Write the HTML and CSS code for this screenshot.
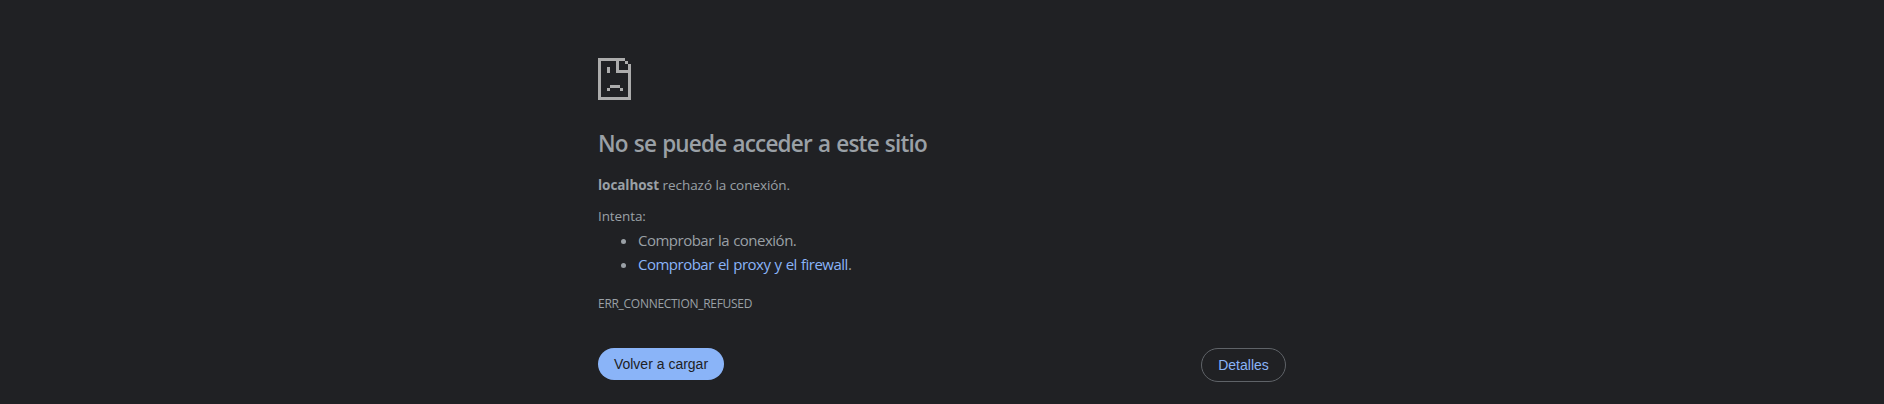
FILE: index.html
```html
<!DOCTYPE html>
<html lang="es">
<head>
<meta charset="utf-8">
<title>localhost</title>
<link rel="stylesheet" href="styles.css">
</head>
<body>
<main class="page">
  <svg class="icon" viewBox="0 0 33 42" shape-rendering="crispEdges" aria-hidden="true">
    <path d="M0 0H27V3H21V12H33V42H0ZM3 3V39H30V15H18V3ZM27 3H30V6H33V12H30V6H27ZM9 9H12V15H9ZM12 27H22V30H25V33H22V30H12V33H9V30H12Z" fill-rule="evenodd"/>
  </svg>
  <h1 class="title">No se puede acceder a este sitio</h1>
  <p class="summary"><strong>localhost</strong> rechazó la conexión.</p>
  <p class="try">Intenta:</p>
  <ul class="tips">
    <li>Comprobar la conexión.</li>
    <li><a class="link">Comprobar el proxy y el firewall</a>.</li>
  </ul>
  <p class="code">ERR_CONNECTION_REFUSED</p>
  <div class="actions">
    <button class="btn primary">Volver a cargar</button>
    <button class="btn secondary">Detalles</button>
  </div>
</main>
</body>
</html>
```
FILE: styles.css
```css
* { box-sizing: border-box; }
body {
  margin: 0;
  background: #202124;
  color: #9aa0a6;
  font-family: "Open Sans", "Noto Sans", sans-serif;
  overflow: hidden;
}
.page { width: 688px; margin: 0 auto; padding-top: 58px; }
.icon { display: block; width: 33px; height: 42px; fill: #acacac; }
h1, p, ul { margin: 0; padding: 0; }
.title { margin-top: 28px; font-size: 22.5px; line-height: 32px; font-weight: 600; letter-spacing: -0.8px; word-spacing: 1px; white-space: nowrap; }
.summary { margin-top: 15px; font-size: 13.5px; line-height: 20px; letter-spacing: -0.05px; }
.try { margin-top: 11px; font-size: 13.5px; line-height: 20px; letter-spacing: -0.1px; }
.tips { padding-left: 40px; font-size: 15px; line-height: 24px; letter-spacing: -0.5px; word-spacing: 0.7px; margin-top: 2px; }
.link { color: #8ab4f8; }
.code { margin-top: 19px; font-size: 12px; line-height: 18px; letter-spacing: -0.29px; }
.actions { display: flex; justify-content: space-between; align-items: flex-start; margin-top: 35px; }
.btn {
  font: 14px/16px "Liberation Sans", Arial, sans-serif;
  border-radius: 20px;
  padding: 0;
}
.primary { width: 126px; height: 32px; border: 0; background: #8ab4f8; color: #202124; }
.secondary { width: 85px; height: 34px; border: 1px solid #5f6368; background: transparent; color: #8ab4f8; }
```
